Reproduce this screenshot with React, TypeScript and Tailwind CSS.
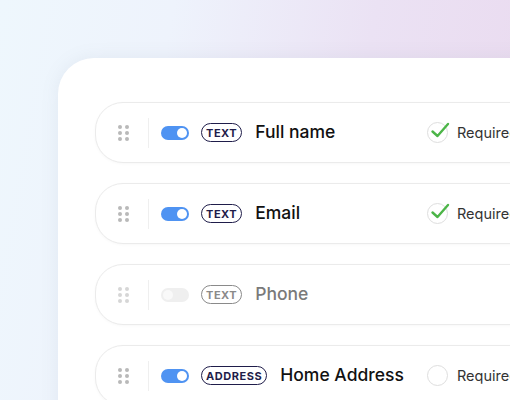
import React from "react";

type Row = {
  enabled: boolean;
  tag: string;
  label: string;
  required: boolean | null;
};

const rows: Row[] = [
  { enabled: true, tag: "TEXT", label: "Full name", required: true },
  { enabled: true, tag: "TEXT", label: "Email", required: true },
  { enabled: false, tag: "TEXT", label: "Phone", required: null },
  { enabled: true, tag: "ADDRESS", label: "Home Address", required: false },
];

function Dots({ enabled }: { enabled: boolean }) {
  const c = enabled ? "bg-[#b9b9b9]" : "bg-[#d6d6d6]";
  return (
    <div className="grid grid-cols-2 gap-x-[3px] gap-y-[2px]">
      {Array.from({ length: 6 }).map((_, i) => (
        <span key={i} className={`block h-[4px] w-[4px] rounded-full ${c}`} />
      ))}
    </div>
  );
}

function Toggle({ on }: { on: boolean }) {
  return on ? (
    <div className="flex h-[14px] w-[28px] items-center justify-end rounded-full bg-[#4f93f2] pr-[2px]">
      <span className="block h-[10px] w-[10px] rounded-full bg-white" />
    </div>
  ) : (
    <div className="flex h-[14px] w-[28px] items-center justify-start rounded-full bg-[#efefef] pl-[2px]">
      <span className="block h-[10px] w-[10px] rounded-full bg-[#f9f9f9]" />
    </div>
  );
}

function Tag({ text, on }: { text: string; on: boolean }) {
  return (
    <span
      className={`flex h-[19px] items-center rounded-full border-[1.5px] px-[4px] pt-[1px] text-[11px] font-bold tracking-[0.05em] leading-none ${
        on ? "border-[#1f1d4a] text-[#1f1d4a]" : "border-[#8a8a8a] text-[#8a8a8a]"
      }`}
    >
      {text}
    </span>
  );
}

function Check({ checked }: { checked: boolean }) {
  return (
    <div className="relative h-[21px] w-[21px] shrink-0 rounded-full border border-[#dedede] bg-white">
      {checked && (
        <svg
          className="absolute left-[2px] top-[-2px]"
          width="21"
          height="19"
          viewBox="0 0 21 19"
          fill="none"
        >
          <path
            d="M2.5 10.5 L7.5 15 L18 3"
            stroke="#4cb548"
            strokeWidth="2.4"
            strokeLinecap="round"
            strokeLinejoin="round"
          />
        </svg>
      )}
    </div>
  );
}

export default function App() {
  return (
    <div
      className="h-[400px] w-[510px] overflow-hidden bg-[linear-gradient(100deg,#eef7fd_0%,#eef3fc_30%,#ebe2f4_65%,#eadaef_100%)] pl-[58px] pt-[58px]"
      style={{ fontFamily: "Inter, 'Noto Sans', sans-serif" }}
    >
      <div className="h-[400px] w-[560px] rounded-tl-[36px] bg-white pl-[37px] pt-[44px] shadow-[0_0_18px_rgba(120,130,150,0.10)]">
        <div className="flex flex-col gap-[20px]">
          {rows.map((r, i) => (
            <div
              key={i}
              className="flex h-[61px] w-[520px] items-center rounded-[28px] border border-[#ebebeb] bg-white pl-[22px] shadow-[0_1px_3px_rgba(0,0,0,0.03)]"
            >
              <div className="flex w-[309px] shrink-0 items-center">
                <Dots enabled={r.enabled} />
                <div className="ml-[19px] h-[30px] w-px bg-[#efefef]" />
                <div className="ml-[12px]">
                  <Toggle on={r.enabled} />
                </div>
                <div className="ml-[12px]">
                  <Tag text={r.tag} on={r.enabled} />
                </div>
                <div
                  className={`ml-[13px] mb-[2px] whitespace-nowrap text-[17.5px] font-medium leading-none ${
                    r.enabled ? "text-[#111]" : "text-[#7a7a7a]"
                  }`}
                >
                  {r.label}
                </div>
              </div>
              {r.required !== null && (
                <div className="flex items-center gap-[9px]">
                  <Check checked={r.required} />
                  <span className="whitespace-nowrap text-[14.5px] text-[#333]">Required</span>
                </div>
              )}
            </div>
          ))}
        </div>
      </div>
    </div>
  );
}
